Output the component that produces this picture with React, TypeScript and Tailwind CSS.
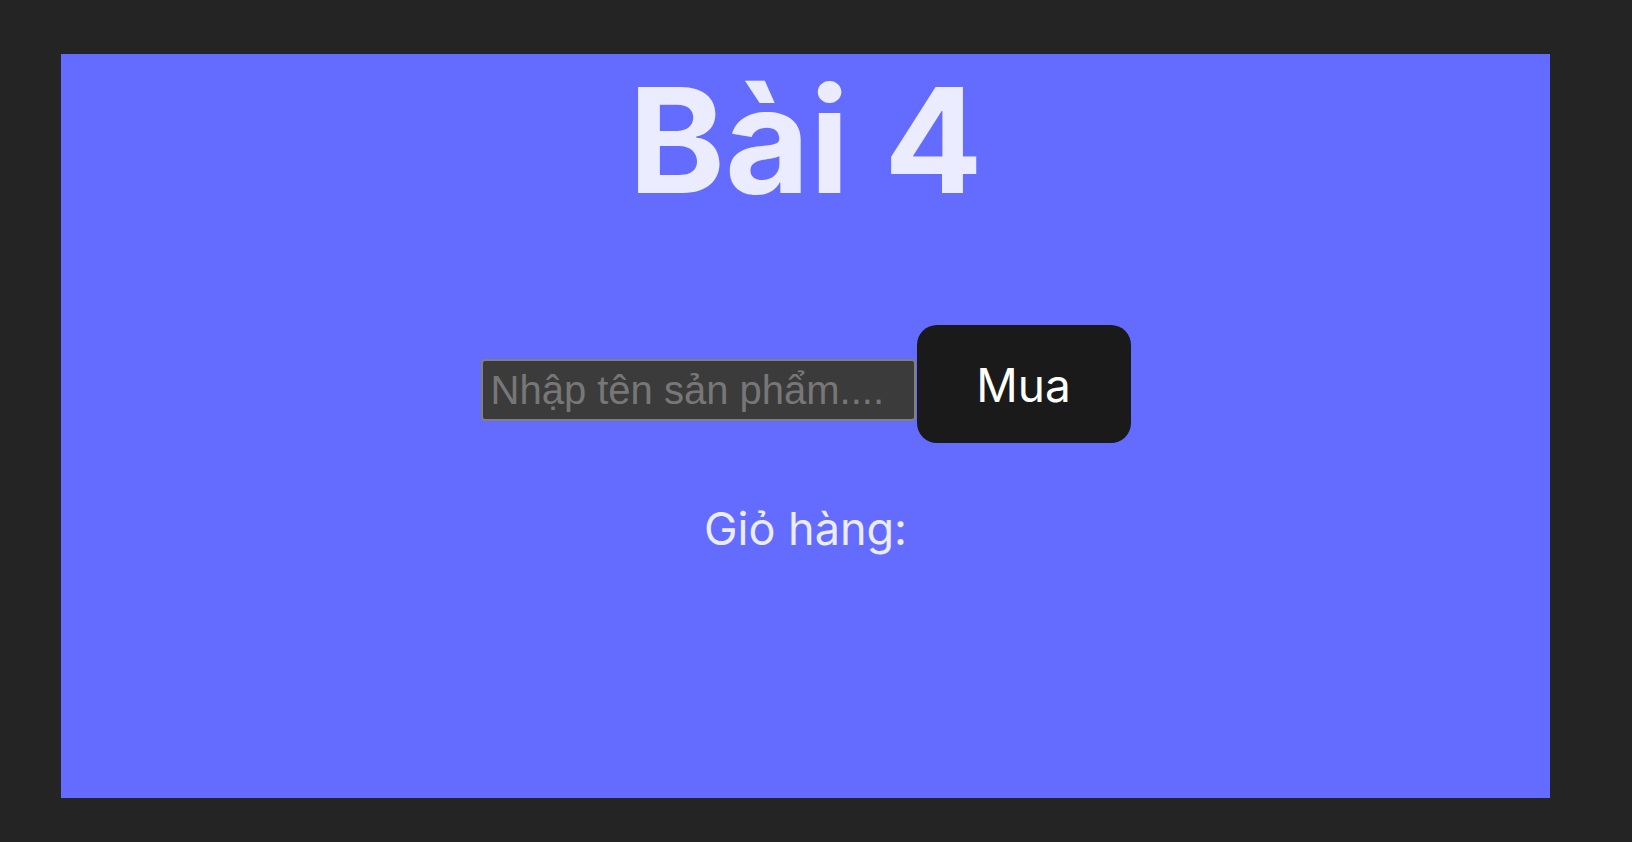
import React from "react";

export default function App() {
  return (
    <div className="min-h-[842px] w-full bg-[#242424] pl-[61px] pt-[54px] font-['Inter',sans-serif]">
      <div className="flex h-[744px] w-[1489px] flex-col items-center bg-[#646cff] text-[#ebecff]">
        <h1 className="mt-[13px] text-[146px] font-bold leading-[146px]">Bài 4</h1>
        <div className="mt-[112px] flex items-start gap-[1px]">
          <input
            type="text"
            placeholder="Nhập tên sản phẩm...."
            className="mt-[34px] h-[62px] w-[435px] rounded-[4px] border-2 border-[#808080] bg-[#3b3b3b] px-[8px] font-['Liberation_Sans',Arial,sans-serif] text-[40px] text-white outline-none placeholder:text-[#777777]"
          />
          <button className="flex h-[118px] w-[214px] items-center justify-center rounded-[20px] bg-[#1a1a1a] pt-[3px] text-[46px] font-normal text-white">
            Mua
          </button>
        </div>
        <p className="mt-[52px] text-[45px] leading-normal">Giỏ hàng:</p>
      </div>
    </div>
  );
}
